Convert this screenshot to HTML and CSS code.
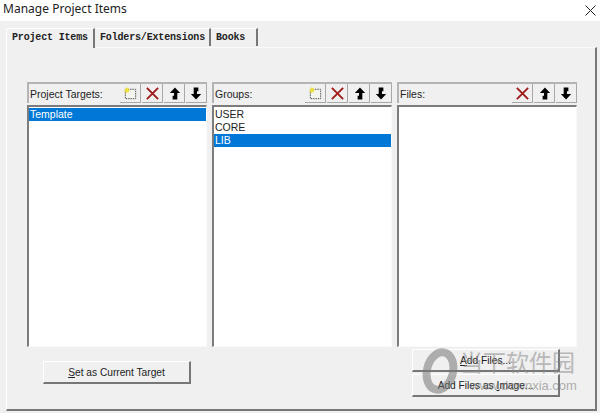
FILE: index.html
```html
<!DOCTYPE html>
<html lang="en">
<head>
<meta charset="utf-8">
<title>Manage Project Items</title>
<link rel="stylesheet" href="styles.css">
</head>
<body>
<svg class="defs" width="0" height="0" aria-hidden="true">
  <symbol id="i-new" viewBox="0 0 16 16">
    <rect x="2.5" y="3.5" width="11" height="10" fill="#f4f4ee" stroke="#444" stroke-dasharray="1.5 1"/>
    <path d="M4 0.5l.8 2 2-.8-1 2 2 .8-2 .8.6 2-2-1-1.2 1.8-.4-2.2-2 .2 1.6-1.4-1.2-1.8 2 .4z" fill="#eee23a"/>
  </symbol>
  <symbol id="i-del" viewBox="0 0 16 16">
    <path d="M2 2l12 12M14 2L2 14" stroke="#a01c1c" stroke-width="2" fill="none"/>
  </symbol>
  <symbol id="i-up" viewBox="0 0 16 16">
    <path d="M8.5 1.5L14 7.5H11V14.5H6V10.5H7.5V7.5H3z" fill="#000"/>
  </symbol>
  <symbol id="i-down" viewBox="0 0 16 16">
    <path d="M7.5 14.5L2 8.5H5V1.5H10V5.5H8.5V8.5H13z" fill="#000"/>
  </symbol>
</svg>
<header class="titlebar">
  <span class="title">Manage Project Items</span>
  <svg class="close" viewBox="0 0 11 11" width="11" height="11"><path d="M.5.5l10 10M10.5.5l-10 10" stroke="#222" fill="none"/></svg>
</header>
<main class="dialog">
  <nav class="tabs">
    <span class="tab active">Project Items</span>
    <span class="tab">Folders/Extensions</span>
    <span class="tab">Books</span>
  </nav>
  <section class="page">
    <div class="columns">
      <div class="col">
        <div class="colhead">
          <span class="label">Project Targets:</span>
          <button class="tool"><svg class="ico"><use href="#i-new"/></svg></button>
          <button class="tool"><svg class="ico"><use href="#i-del"/></svg></button>
          <button class="tool"><svg class="ico"><use href="#i-up"/></svg></button>
          <button class="tool"><svg class="ico"><use href="#i-down"/></svg></button>
        </div>
        <ul class="list">
          <li class="sel">Template</li>
        </ul>
      </div>
      <div class="col">
        <div class="colhead">
          <span class="label">Groups:</span>
          <button class="tool"><svg class="ico"><use href="#i-new"/></svg></button>
          <button class="tool"><svg class="ico"><use href="#i-del"/></svg></button>
          <button class="tool"><svg class="ico"><use href="#i-up"/></svg></button>
          <button class="tool"><svg class="ico"><use href="#i-down"/></svg></button>
        </div>
        <ul class="list">
          <li>USER</li>
          <li>CORE</li>
          <li class="sel">LIB</li>
        </ul>
      </div>
      <div class="col">
        <div class="colhead">
          <span class="label">Files:</span>
          <button class="tool"><svg class="ico"><use href="#i-del"/></svg></button>
          <button class="tool"><svg class="ico"><use href="#i-up"/></svg></button>
          <button class="tool"><svg class="ico"><use href="#i-down"/></svg></button>
        </div>
        <ul class="list"></ul>
      </div>
    </div>
    <div class="actions">
      <button class="btn target"><u>S</u>et as Current Target</button>
      <div class="filebtns">
        <button class="btn"><u>A</u>dd Files...</button>
        <button class="btn">Add Files as <u>I</u>mage...</button>
      </div>
    </div>
  </section>
</main>
<div class="watermark">
  <svg class="wm-logo" viewBox="0 0 40 46" width="40" height="46"><ellipse cx="21" cy="23" rx="13" ry="19" fill="none" stroke="#777" stroke-width="8" transform="rotate(14 21 23)"/></svg>
  <span class="wm-cn">当下软件园</span>
  <span class="wm-url">www.downxia.com</span>
</div>
</body>
</html>
```
FILE: styles.css
```css
* { box-sizing: border-box; }
html, body { margin: 0; padding: 0; }
body {
  width: 600px;
  height: 413px;
  overflow: hidden;
  position: relative;
  background: #f0f0f0;
  font-family: "Liberation Sans", Arial, sans-serif;
  font-size: 10.5px;
  color: #111;
  display: flex;
  flex-direction: column;
}
.defs { position: absolute; }
.titlebar {
  height: 21px;
  flex: none;
  background: #fff;
  display: flex;
  align-items: center;
  justify-content: space-between;
  padding: 0 4px 5px 3px;
}
.title {
  font-family: "Noto Sans", sans-serif;
  font-size: 12px;
  color: #222;
  letter-spacing: .02px;
}
.close { margin-top: 5px; margin-right: 0; }
.dialog {
  flex: 1;
  padding: 6px 3px 2px 6px;
  display: flex;
  flex-direction: column;
}
.tabs {
  display: flex;
  height: 20px;
  flex: none;
  align-items: flex-end;
  position: relative;
  z-index: 1;
}
.tab {
  font-family: "Liberation Mono", monospace;
  font-weight: bold;
  font-size: 10px;
  letter-spacing: -.17px;
  height: 18px;
  line-height: 18px;
  padding: 0 4px 0 5px;
  border-right: 2px solid #777;
  border-top: 1px solid #fff;
  margin-bottom: 1px;
  background: #f0f0f0;
  color: #222;
}
.tab:last-child { padding-right: 11px; }
.tab.active {
  height: 20px;
  line-height: 17px;
  margin-bottom: -1px;
  padding: 0 4px 0 5px;
  width: 89px;
  border-left: 1px solid #fff;
}
.page {
  flex: 1;
  border-top: 1px solid #fafafa;
  border-left: 1px solid #fff;
  border-right: 2px solid #777;
  border-bottom: 2px solid #777;
  padding: 34px 18px 0 20px;
  display: flex;
  flex-direction: column;
  margin-top: 0;
}
.columns {
  display: grid;
  grid-template-columns: 180px 180px 180px;
  column-gap: 5px;
  height: 265px;
  flex: none;
}
.col {
  display: flex;
  flex-direction: column;
  gap: 2px;
  min-height: 0;
}
.colhead {
  height: 21px;
  flex: none;
  display: flex;
  align-items: stretch;
  border-top: 2px solid #b4b4b4;
  border-left: 2px solid #b4b4b4;
  padding-left: 1px;
  gap: 1px;
}
.label {
  flex: 1;
  line-height: 20px;
  font-size: 10.5px;
  color: #222;
}
.tool {
  width: 21px;
  padding: 0;
  margin: 0;
  background: #f0f0f0;
  border: 0;
  border-right: 1px solid #a8a8a8;
  border-bottom: 1px solid #a8a8a8;
  display: flex;
  align-items: center;
  justify-content: center;
}
.ico { width: 15px; height: 15px; display: block; }
.list {
  flex: 1;
  margin: 0;
  padding: 1px 0 0 0;
  list-style: none;
  background: #fff;
  border-top: 2px solid #7c7c7c;
  border-left: 2px solid #7c7c7c;
  border-right: 1px solid #fafafa;
  border-bottom: 1px solid #fafafa;
}
.list li {
  height: 13px;
  line-height: 13px;
  padding-left: 1px;
  font-size: 10.5px;
  color: #222;
}
.list li.sel { background: #0078d7; color: #fff; }
.actions {
  display: flex;
  justify-content: space-between;
  align-items: flex-start;
  padding: 2px 17px 0 16px;
}
.btn {
  width: 148px;
  height: 23px;
  padding: 0;
  background: #f0f0f0;
  font-family: "Liberation Sans", Arial, sans-serif;
  font-size: 10.2px;
  color: #222;
  border: 0;
  border-top: 1px solid #fff;
  border-left: 1px solid #fff;
  border-right: 2px solid #777;
  border-bottom: 2px solid #777;
}
.target { margin-top: 12px; }
.filebtns {
  display: flex;
  flex-direction: column;
  gap: 2px;
}
.watermark {
  position: absolute;
  left: 420px;
  top: 348px;
  width: 180px;
  height: 56px;
  pointer-events: none;
  opacity: .55;
}
.wm-logo { position: absolute; left: -1px; top: 0; }
.wm-cn {
  position: absolute;
  left: 40px;
  top: -3px;
  font-family: "Noto Sans CJK SC", sans-serif;
  font-size: 23px;
  font-weight: 400;
  line-height: 32px;
  color: #8c8c8c;
  white-space: nowrap;
}
.wm-url {
  position: absolute;
  left: 50px;
  top: 29px;
  font-family: "Liberation Sans", Arial, sans-serif;
  font-size: 13px;
  line-height: 17px;
  color: #777;
  white-space: nowrap;
}
```
